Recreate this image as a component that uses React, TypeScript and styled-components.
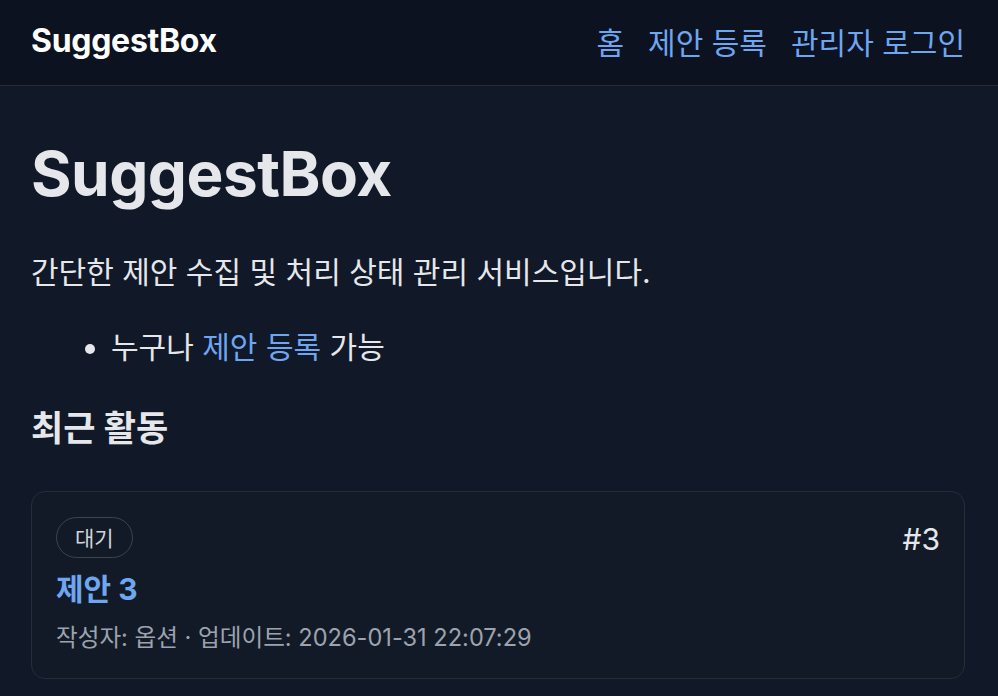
import React from "react";
import styled, { createGlobalStyle } from "styled-components";

const GlobalStyle = createGlobalStyle`
  html, body {
    margin: 0;
    padding: 0;
    background: #111827;
  }
  body {
    font-family: Inter, "Noto Sans CJK KR", "Noto Sans", sans-serif;
    color: #e5e7eb;
  }
  * { box-sizing: border-box; }
`;

const Page = styled.div`
  min-height: 696px;
  background: #111827;
`;

const TopBar = styled.header`
  display: flex;
  align-items: center;
  justify-content: space-between;
  height: 86px;
  padding: 0 33px 4px 31px;
  background: #0c1220;
  border-bottom: 1px solid #252b37;
`;

const Brand = styled.div`
  font-size: 32px;
  font-weight: 700;
  color: #ffffff;
  letter-spacing: -0.3px;
`;

const Nav = styled.nav`
  display: flex;
  gap: 24px;
`;

const NavLink = styled.a`
  font-size: 30px;
  color: #6ea6f2;
  text-decoration: none;
`;

const Main = styled.main`
  padding: 0 33px 0 31px;
`;

const Title = styled.h1`
  margin: 51px 0 0;
  font-size: 62px;
  line-height: 1.2;
  font-weight: 700;
  letter-spacing: -0.5px;
  color: #e5e7eb;
`;

const Lead = styled.p`
  margin: 39px 0 0;
  font-size: 30px;
  line-height: 1.5;
`;

const List = styled.ul`
  margin: 30px 0 0;
  padding-left: 80px;
  font-size: 30px;
  line-height: 1.5;
`;

const InlineLink = styled.a`
  color: #6ea6f2;
  text-decoration: none;
`;

const SectionTitle = styled.h2`
  margin: 36px 0 0;
  font-size: 35px;
  line-height: 1.3;
  font-weight: 700;
`;

const Card = styled.article`
  margin-top: 39px;
  border: 1.5px solid #262d3a;
  border-radius: 14px;
  background: #131a27;
  padding: 25px 24px 24px;
  display: flex;
  flex-direction: column;
`;

const CardHead = styled.div`
  display: flex;
  align-items: center;
  justify-content: space-between;
`;

const Badge = styled.span`
  display: inline-flex;
  align-items: center;
  justify-content: center;
  height: 41px;
  padding: 0 18px;
  border: 1.5px solid #3d4350;
  border-radius: 999px;
  font-size: 21px;
  color: #d1d5db;
`;

const Num = styled.span`
  margin-top: 3px;
  font-size: 30px;
  line-height: 1.2;
  color: #e5e7eb;
`;

const CardTitle = styled.a`
  margin-top: 12px;
  font-size: 30px;
  line-height: 1.3;
  font-weight: 700;
  color: #6ea6f2;
  text-decoration: none;
`;

const Meta = styled.div`
  margin-top: 12px;
  font-size: 23.6px;
  line-height: 1.4;
  color: #9ca3af;
`;

export default function App() {
  return (
    <Page>
      <GlobalStyle />
      <TopBar>
        <Brand>SuggestBox</Brand>
        <Nav>
          <NavLink href="#">홈</NavLink>
          <NavLink href="#">제안 등록</NavLink>
          <NavLink href="#">관리자 로그인</NavLink>
        </Nav>
      </TopBar>
      <Main>
        <Title>SuggestBox</Title>
        <Lead>간단한 제안 수집 및 처리 상태 관리 서비스입니다.</Lead>
        <List>
          <li>
            누구나 <InlineLink href="#">제안 등록</InlineLink> 가능
          </li>
        </List>
        <SectionTitle>최근 활동</SectionTitle>
        <Card>
          <CardHead>
            <Badge>대기</Badge>
            <Num>#3</Num>
          </CardHead>
          <CardTitle href="#">제안 3</CardTitle>
          <Meta>작성자: 옵션 · 업데이트: 2026-01-31 22:07:29</Meta>
        </Card>
      </Main>
    </Page>
  );
}
